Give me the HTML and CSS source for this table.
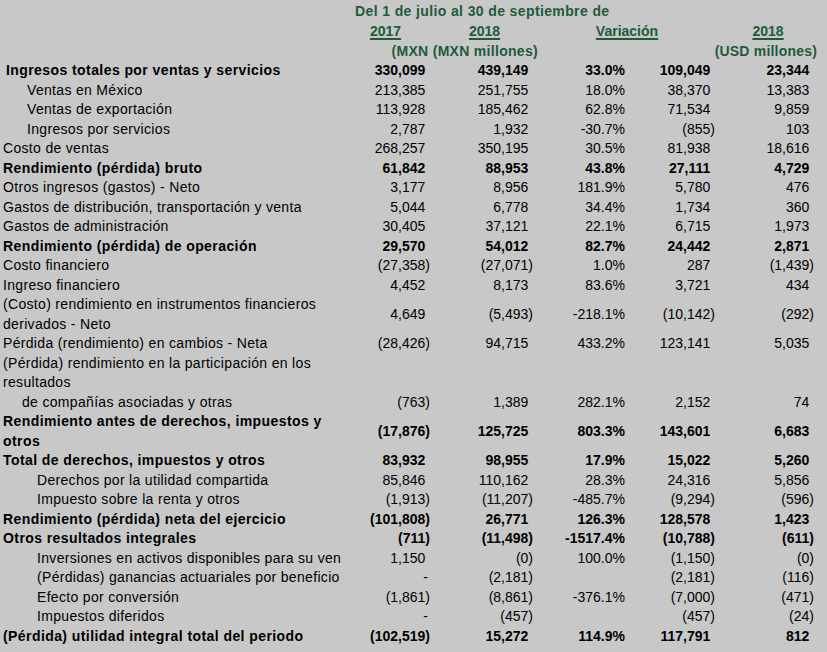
FILE: index.html
```html
<!DOCTYPE html>
<html lang="es">
<head>
<meta charset="utf-8">
<title>Estado de resultados</title>
<link rel="stylesheet" href="styles.css">
</head>
<body>
<div class="sheet">
  <div class="row head">
    <div class="period">Del 1 de julio al 30 de septiembre de</div>
  </div>
  <div class="row head">
    <div></div>
    <div class="h c1"><u>2017</u></div>
    <div class="h c2"><u>2018</u></div>
    <div class="h c34"><u>Variación</u></div>
    <div class="h c5"><u>2018</u></div>
  </div>
  <div class="row head">
    <div></div>
    <div class="h mxn">(MXN (MXN millones)</div>
    <div class="h usd">(USD millones)</div>
  </div>

  <div class="row b first"><div class="lbl">Ingresos totales por ventas y servicios</div><div class="n">330,099<i>)</i></div><div class="n">439,149<i>)</i></div><div class="n pc">33.0%</div><div class="n">109,049<i>)</i></div><div class="n">23,344<i>)</i></div></div>
  <div class="row l1"><div class="lbl">Ventas en México</div><div class="n">213,385<i>)</i></div><div class="n">251,755<i>)</i></div><div class="n pc">18.0%</div><div class="n">38,370<i>)</i></div><div class="n">13,383<i>)</i></div></div>
  <div class="row l1"><div class="lbl">Ventas de exportación</div><div class="n">113,928<i>)</i></div><div class="n">185,462<i>)</i></div><div class="n pc">62.8%</div><div class="n">71,534<i>)</i></div><div class="n">9,859<i>)</i></div></div>
  <div class="row l1"><div class="lbl">Ingresos por servicios</div><div class="n">2,787<i>)</i></div><div class="n">1,932<i>)</i></div><div class="n pc">-30.7%</div><div class="n">(855)</div><div class="n">103<i>)</i></div></div>
  <div class="row"><div class="lbl">Costo de ventas</div><div class="n">268,257<i>)</i></div><div class="n">350,195<i>)</i></div><div class="n pc">30.5%</div><div class="n">81,938<i>)</i></div><div class="n">18,616<i>)</i></div></div>
  <div class="row b"><div class="lbl">Rendimiento (pérdida) bruto</div><div class="n">61,842<i>)</i></div><div class="n">88,953<i>)</i></div><div class="n pc">43.8%</div><div class="n">27,111<i>)</i></div><div class="n">4,729<i>)</i></div></div>
  <div class="row"><div class="lbl">Otros ingresos (gastos) - Neto</div><div class="n">3,177<i>)</i></div><div class="n">8,956<i>)</i></div><div class="n pc">181.9%</div><div class="n">5,780<i>)</i></div><div class="n">476<i>)</i></div></div>
  <div class="row"><div class="lbl">Gastos de distribución, transportación y venta</div><div class="n">5,044<i>)</i></div><div class="n">6,778<i>)</i></div><div class="n pc">34.4%</div><div class="n">1,734<i>)</i></div><div class="n">360<i>)</i></div></div>
  <div class="row"><div class="lbl">Gastos de administración</div><div class="n">30,405<i>)</i></div><div class="n">37,121<i>)</i></div><div class="n pc">22.1%</div><div class="n">6,715<i>)</i></div><div class="n">1,973<i>)</i></div></div>
  <div class="row b"><div class="lbl">Rendimiento (pérdida) de operación</div><div class="n">29,570<i>)</i></div><div class="n">54,012<i>)</i></div><div class="n pc">82.7%</div><div class="n">24,442<i>)</i></div><div class="n">2,871<i>)</i></div></div>
  <div class="row"><div class="lbl">Costo financiero</div><div class="n">(27,358)</div><div class="n">(27,071)</div><div class="n pc">1.0%</div><div class="n">287<i>)</i></div><div class="n">(1,439)</div></div>
  <div class="row"><div class="lbl">Ingreso financiero</div><div class="n">4,452<i>)</i></div><div class="n">8,173<i>)</i></div><div class="n pc">83.6%</div><div class="n">3,721<i>)</i></div><div class="n">434<i>)</i></div></div>
  <div class="row two"><div class="lbl">(Costo) rendimiento en instrumentos financieros<br>derivados - Neto</div><div class="n">4,649<i>)</i></div><div class="n">(5,493)</div><div class="n pc">-218.1%</div><div class="n">(10,142)</div><div class="n">(292)</div></div>
  <div class="row"><div class="lbl">Pérdida (rendimiento) en cambios - Neta</div><div class="n">(28,426)</div><div class="n">94,715<i>)</i></div><div class="n pc">433.2%</div><div class="n">123,141<i>)</i></div><div class="n">5,035<i>)</i></div></div>
  <div class="row two"><div class="lbl">(Pérdida) rendimiento en la participación en los<br>resultados</div></div>
  <div class="row sub"><div class="lbl">de compañías asociadas y otras</div><div class="n">(763)</div><div class="n">1,389<i>)</i></div><div class="n pc">282.1%</div><div class="n">2,152<i>)</i></div><div class="n">74<i>)</i></div></div>
  <div class="row b two"><div class="lbl">Rendimiento antes de derechos, impuestos y<br>otros</div><div class="n">(17,876)</div><div class="n">125,725<i>)</i></div><div class="n pc">803.3%</div><div class="n">143,601<i>)</i></div><div class="n">6,683<i>)</i></div></div>
  <div class="row b"><div class="lbl">Total de derechos, impuestos y otros</div><div class="n">83,932<i>)</i></div><div class="n">98,955<i>)</i></div><div class="n pc">17.9%</div><div class="n">15,022<i>)</i></div><div class="n">5,260<i>)</i></div></div>
  <div class="row l2"><div class="lbl">Derechos por la utilidad compartida</div><div class="n">85,846<i>)</i></div><div class="n">110,162<i>)</i></div><div class="n pc">28.3%</div><div class="n">24,316<i>)</i></div><div class="n">5,856<i>)</i></div></div>
  <div class="row l2"><div class="lbl">Impuesto sobre la renta y otros</div><div class="n">(1,913)</div><div class="n">(11,207)</div><div class="n pc">-485.7%</div><div class="n">(9,294)</div><div class="n">(596)</div></div>
  <div class="row b"><div class="lbl">Rendimiento (pérdida) neta del ejercicio</div><div class="n">(101,808)</div><div class="n">26,771<i>)</i></div><div class="n pc">126.3%</div><div class="n">128,578<i>)</i></div><div class="n">1,423<i>)</i></div></div>
  <div class="row b"><div class="lbl">Otros resultados integrales</div><div class="n">(711)</div><div class="n">(11,498)</div><div class="n pc">-1517.4%</div><div class="n">(10,788)</div><div class="n">(611)</div></div>
  <div class="row l2"><div class="lbl">Inversiones en activos disponibles para su ven</div><div class="n">1,150<i>)</i></div><div class="n">(0)</div><div class="n pc">100.0%</div><div class="n">(1,150)</div><div class="n">(0)</div></div>
  <div class="row l2"><div class="lbl">(Pérdidas) ganancias actuariales por beneficio</div><div class="n dash">-</div><div class="n">(2,181)</div><div class="n pc"></div><div class="n">(2,181)</div><div class="n">(116)</div></div>
  <div class="row l2"><div class="lbl">Efecto por conversión</div><div class="n">(1,861)</div><div class="n">(8,861)</div><div class="n pc">-376.1%</div><div class="n">(7,000)</div><div class="n">(471)</div></div>
  <div class="row l2"><div class="lbl">Impuestos diferidos</div><div class="n dash">-</div><div class="n">(457)</div><div class="n pc"></div><div class="n">(457)</div><div class="n">(24)</div></div>
  <div class="row b"><div class="lbl">(Pérdida) utilidad integral total del periodo</div><div class="n">(102,519)</div><div class="n">15,272<i>)</i></div><div class="n pc">114.9%</div><div class="n">117,791<i>)</i></div><div class="n">812<i>)</i></div></div>
</div>
</body>
</html>
```
FILE: styles.css
```css
html, body {
  margin: 0;
  padding: 0;
  background: #c8c8c8;
}
body {
  width: 827px;
  height: 652px;
  overflow: hidden;
  font-family: "Liberation Sans", Arial, sans-serif;
  font-size: 14px;
  color: #000;
}
.sheet {
  padding-top: 1px;
}
.row {
  display: grid;
  grid-template-columns: 345px 85px 103px 92px 90px 99px;
  height: 19.5px;
  line-height: 19.5px;
  align-items: center;
  white-space: nowrap;
}
.row.two {
  height: 39px;
}
.row.head {
  height: 20px;
  line-height: 20px;
}
.b {
  font-weight: bold;
}
.lbl {
  padding-left: 3px;
  letter-spacing: 0.32px;
}
.b .lbl {
  letter-spacing: 0.42px;
}
.first .lbl { padding-left: 6px; }
.l1 .lbl { padding-left: 27px; }
.l2 .lbl { padding-left: 37px; }
.sub .lbl { padding-left: 22px; }
.n {
  text-align: right;
}
.n i {
  font-style: normal;
  visibility: hidden;
}
.n.dash {
  padding-right: 2px;
}
.head {
  color: #1d5b3b;
  font-weight: bold;
}
.period {
  grid-column: 2 / 7;
  padding-left: 10px;
  letter-spacing: 0.38px;
}
.h u {
  text-decoration-thickness: 2px;
  text-underline-offset: 2px;
}
.c1 { text-align: center; padding-right: 4px; }
.c2 { text-align: center; padding-left: 6px; }
.c34 { grid-column: 4 / 6; text-align: center; padding-left: 6px; }
.c5 { text-align: center; padding-left: 7px; }
.mxn {
  grid-column: 2 / 4;
  text-align: right;
  margin-right: -5px;
  letter-spacing: 0.3px;
}
.usd {
  grid-column: 5 / 7;
  text-align: right;
  margin-right: -3px;
  letter-spacing: 0.2px;
}
```
